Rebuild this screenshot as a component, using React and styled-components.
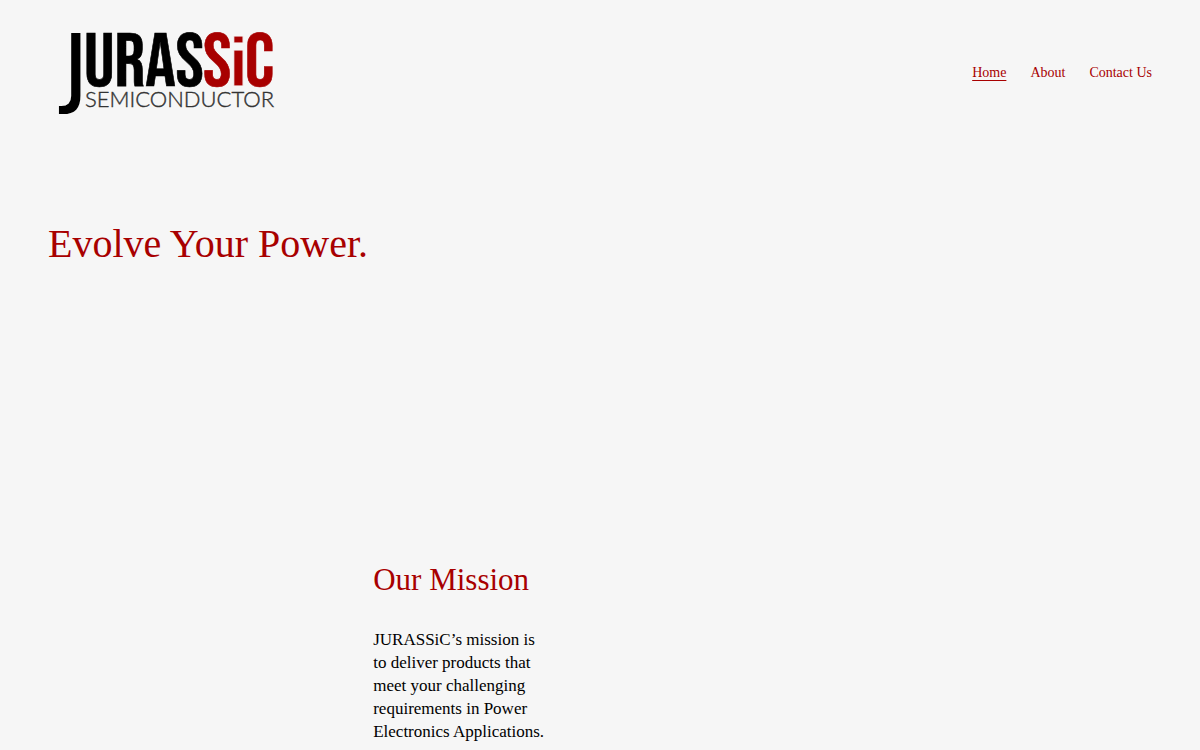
import React from "react";
import styled, { createGlobalStyle } from "styled-components";

const GlobalStyle = createGlobalStyle`
  * {
    box-sizing: border-box;
  }

  body {
    margin: 0;
    background-color: #f6f6f6;
    color: #000;
    font-family: "Liberation Serif", "Times New Roman", serif;
  }
`;

const Header = styled.header`
  display: flex;
  align-items: center;
  justify-content: space-between;
  padding: 24px 48px;
`;

const LogoLink = styled.a`
  display: block;
`;

const LogoSvg = styled.svg`
  display: block;
  width: 234px;
  height: 98px;
  overflow: visible;
`;

const LogoText = styled.text`
  font-family: "Bebas Neue", "Roboto Condensed", sans-serif;
  font-size: 76px;
  fill: ${(props) => props.$color || "#000"};
  stroke: ${(props) => props.$color || "#000"};
  stroke-width: 0.6;
`;

const LogoInitial = styled.text`
  font-family: "Bebas Neue", "Roboto Condensed", sans-serif;
  font-size: 121px;
  fill: #000;
  stroke: #f6f6f6;
  stroke-width: 4;
`;

const LogoLowercase = styled.text`
  font-family: "Liberation Sans", Arial, sans-serif;
  font-size: 68px;
  font-weight: 700;
  fill: #a80000;
  stroke: #f6f6f6;
  stroke-width: 1;
`;

const LogoTagline = styled.text`
  font-family: Lato, sans-serif;
  font-size: 22px;
  font-weight: 300;
  fill: #333;
  stroke: #333;
  stroke-width: 0.4;
`;

const Nav = styled.nav`
  display: flex;
  gap: 24px;
`;

const NavLink = styled.a`
  color: #a80000;
  font-size: 14px;
  line-height: 20px;
  text-decoration: ${(props) => (props.$active ? "underline" : "none")};
  text-decoration-thickness: 1px;
  text-underline-offset: 3px;
`;

const Hero = styled.section`
  padding: 74px 48px 0;
  min-height: 414px;
`;

const Title = styled.h1`
  margin: 0;
  color: #a80000;
  font-size: 40px;
  font-weight: 400;
  line-height: 48px;
`;

const Grid = styled.section`
  display: grid;
  grid-template-columns: repeat(24, minmax(0, 1fr));
  column-gap: 11px;
  padding: 0 48px;
`;

const Mission = styled.div`
  grid-column: 8 / span 4;
`;

const Heading = styled.h2`
  margin: 0 0 28px;
  color: #a80000;
  font-size: 31px;
  font-weight: 400;
  line-height: 40px;
`;

const Paragraph = styled.p`
  margin: 0;
  font-size: 17px;
  line-height: 23px;
`;

const Logo = () => (
  <LogoSvg viewBox="0 0 234 98" role="img" aria-label="JURASSiC Semiconductor">
    <LogoInitial x="7" y="92">
      J
    </LogoInitial>
    <LogoText x="36" y="62">
      URAS
    </LogoText>
    <LogoText x="155" y="62" $color="#a80000">
      S
    </LogoText>
    <LogoLowercase x="181" y="62">
      i
    </LogoLowercase>
    <LogoText x="197" y="62" $color="#a80000">
      C
    </LogoText>
    <LogoTagline x="37" y="83">
      SEMICONDUCTOR
    </LogoTagline>
  </LogoSvg>
);

const links = [
  { label: "Home", href: "#home", active: true },
  { label: "About", href: "#about" },
  { label: "Contact Us", href: "#contact" },
];

export default function App() {
  return (
    <>
      <GlobalStyle />
      <Header>
        <LogoLink href="#home">
          <Logo />
        </LogoLink>
        <Nav>
          {links.map((link) => (
            <NavLink key={link.label} href={link.href} $active={link.active}>
              {link.label}
            </NavLink>
          ))}
        </Nav>
      </Header>
      <main>
        <Hero>
          <Title>Evolve Your Power.</Title>
        </Hero>
        <Grid>
          <Mission>
            <Heading>Our Mission</Heading>
            <Paragraph>
              JURASSiC’s mission is to deliver products that meet your
              challenging requirements in Power Electronics Applications.
            </Paragraph>
          </Mission>
        </Grid>
      </main>
    </>
  );
}
